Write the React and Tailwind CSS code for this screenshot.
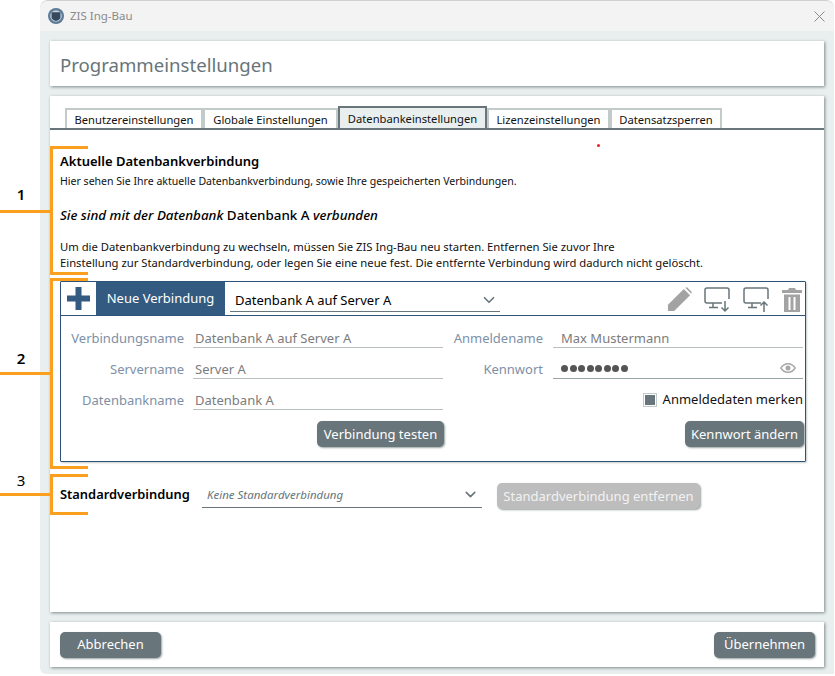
import React from "react";
import { ChevronDown } from "lucide-react";

const FONT = { fontFamily: '"Noto Sans", "Open Sans", sans-serif' };

function Tab({ children, active, w }) {
  if (active) {
    return (
      <div className={`${w} h-[22px] -mt-px border-2 border-b-0 border-[#68757a] bg-[#e9eeee] text-[11.2px] text-[#111] flex items-center justify-center pt-[2px]`}>
        {children}
      </div>
    );
  }
  return (
    <div className={`${w} h-[20px] border-2 border-b-0 border-[#c3caca] bg-white text-[11.2px] text-[#111] flex items-center justify-center pt-[2px]`}>
      {children}
    </div>
  );
}

function Field({ label, children, dark, labelW, padded }) {
  return (
    <div className="flex items-end h-[21px]">
      <div className={`${labelW} text-right text-[13px] leading-[20px] text-[#7d90a8] shrink-0`}>{label}</div>
      <div className={`flex-1 h-[21px] border-b flex items-center pt-[3px] text-[13px] text-[#7c7c7c] ${padded ? "ml-[10px] pl-[8px]" : "ml-[9px] pl-[2px]"} ${dark ? "border-[#9aa5a8]" : "border-[#b9bebf]"}`}>
        {children}
      </div>
    </div>
  );
}

function Btn({ children, w, disabled }) {
  return (
    <div className={`${w} h-[26px] rounded-[5px] flex items-center justify-center pt-[1px] text-[13px] shadow-[1px_1px_2px_#9aa3a3] ${disabled ? "bg-[#bdbdbd] text-[#f2f2f2]" : "bg-[#68757a] text-white"}`}>
      {children}
    </div>
  );
}

function Bracket({ top, height, stem, num, numTop, bold }) {
  return (
    <>
      <div className="absolute left-[50px] w-[38px] border-[3px] border-r-0 border-[#fb9f1e]" style={{ top, height }} />
      <div className="absolute left-0 w-[50px] h-[3px] bg-[#fb9f1e]" style={{ top: stem }} />
      <div className={`absolute left-[14px] w-[14px] text-center text-[15px] leading-[20px] text-black ${bold ? "font-semibold" : ""}`} style={{ top: numTop }}>
        {num}
      </div>
    </>
  );
}

export default function App() {
  return (
    <div style={FONT} className="relative w-[835px] h-[676px] bg-white overflow-hidden pl-[40px]">
      <div className="w-[794px] h-[674px] rounded-t-[8px] rounded-bl-[6px] bg-[#e9eeee] border-t border-[#cfcfcf] flex flex-col">
        {/* title bar */}
        <div className="h-[30px] shrink-0 bg-[#f3f3f3] rounded-t-[8px] flex items-center pl-[8px] pr-[9px]">
          <svg width="16" height="16" viewBox="0 0 16 16">
            <circle cx="8" cy="8" r="8" fill="#5b7a96" />
            <circle cx="8" cy="8" r="5.8" fill="#c7d0d8" />
            <path d="M3.6 4.2h8.8v5.2c0 1.6-2.6 3.2-4.4 3.6-1.8-.4-4.4-2-4.4-3.6z" fill="#34495e" />
          </svg>
          <span className="ml-[6px] text-[11.5px] text-[#8a8a8a]">ZIS Ing-Bau</span>
          <svg className="ml-auto" width="11" height="11" viewBox="0 0 11 11" stroke="#8c8c8c" strokeWidth="1">
            <path d="M.5.5l10 10M10.5.5l-10 10" />
          </svg>
        </div>

        <div className="flex-1 flex flex-col px-[10px] pt-[10px]">
          {/* header */}
          <div className="h-[45px] shrink-0 bg-white shadow-[1px_1px_3px_#7f8a8a] flex items-center pl-[10px] pt-[3px] text-[18.6px] text-[#68757a]">
            Programmeinstellungen
          </div>

          {/* main card */}
          <div className="mt-[10px] h-[516px] shrink-0 bg-white shadow-[1px_1px_3px_#7f8a8a] flex flex-col">
            <div className="mt-[13px] h-[21px] shrink-0 border-b-2 border-[#68757a] flex items-end pl-[15px]">
              <Tab w="w-[138px]">Benutzereinstellungen</Tab>
              <Tab w="w-[135px]">Globale Einstellungen</Tab>
              <Tab w="w-[149px]" active>Datenbankeinstellungen</Tab>
              <Tab w="w-[123px]">Lizenzeinstellungen</Tab>
              <Tab w="w-[112px]">Datensatzsperren</Tab>
            </div>

            <div className="pl-[10px] pr-[18px]">
              <div className="mt-[22px] text-[13px] leading-[18px] font-semibold text-black">Aktuelle Datenbankverbindung</div>
              <div className="mt-[3px] text-[10.55px] leading-[16px] text-[#111]">
                Hier sehen Sie Ihre aktuelle Datenbankverbindung, sowie Ihre gespeicherten Verbindungen.
              </div>
              <div className="mt-[17px] text-[13.4px] leading-[18px] text-black">
                <span className="italic font-medium">Sie sind mit der Datenbank </span>
                <span className="font-medium">Datenbank A </span>
                <span className="italic font-medium">verbunden</span>
              </div>
              <div className="mt-[15px] text-[11.25px] leading-[16px] text-[#111]">
                Um die Datenbankverbindung zu wechseln, müssen Sie ZIS Ing-Bau neu starten. Entfernen Sie zuvor Ihre
                <br />
                Einstellung zur Standardverbindung, oder legen Sie eine neue fest. Die entfernte Verbindung wird dadurch nicht gelöscht.
              </div>

              {/* connection panel */}
              <div className="mt-[10px] w-[746px] h-[181px] border border-[#2f5378] rounded-[1px] shadow-[1px_1px_2px_#c5cbcb] flex flex-col">
                <div className="h-[34px] shrink-0 border-b border-[#2f5378] flex">
                  <div className="w-[35px] flex items-center justify-center">
                    <svg width="25" height="25" viewBox="0 0 25 25" fill="#335a80">
                      <path d="M9.5 1h6v8.500h8.500v6h-8.500v8.500h-6v-8.500h-8.500v-6h8.500z" />
                    </svg>
                  </div>
                  <div className="w-[129px] bg-[#335a80] text-white text-[13px] flex items-center justify-center pt-[1px]">Neue Verbindung</div>
                  <div className="ml-[5px] w-[270px] h-[30px] border-b border-[#68757a] flex items-center pt-[8px] pl-[5px] pr-[2px] text-[13px] text-black">
                    Datenbank A auf Server A
                    <ChevronDown className="ml-auto -mt-[2px]" size={18} strokeWidth={2.2} color="#68757a" />
                  </div>
                  <div className="ml-auto flex items-center pr-[3px] gap-[12px] pt-[2px]">
                    <svg width="25" height="25" viewBox="0 0 26 26" fill="#a3a3a3">
                      <path d="M1 25v-6.500L17.500 2l6.500 6.500L7.500 25z" />
                      <path d="M19 .8l1.800-.6 5 5-.6 1.800z" />
                    </svg>
                    <svg width="27" height="26" viewBox="0 0 27 26" fill="none" stroke="#68757a" strokeWidth="1.500">
                      <path d="M18 16H3a2 2 0 0 1-2-2V3a2 2 0 0 1 2-2h20a2 2 0 0 1 2 2v9" />
                      <path d="M9 16v4M5 20.500h9" />
                      <path d="M21 14v10M17.500 20.500L21 24l3.500-3.500" />
                    </svg>
                    <svg width="27" height="26" viewBox="0 0 27 26" fill="none" stroke="#68757a" strokeWidth="1.500">
                      <path d="M18 16H3a2 2 0 0 1-2-2V3a2 2 0 0 1 2-2h20a2 2 0 0 1 2 2v9" />
                      <path d="M9 16v4M5 20.500h9" />
                      <path d="M21 25V15M17.500 18.500L21 15l3.500 3.500" />
                    </svg>
                    <svg width="20" height="26" viewBox="0 0 20 26" fill="#a3a3a3">
                      <path d="M7 1h6l1 2h6v3H0V3h6z" />
                      <path d="M2 7.500h16V25H2zM6.500 10v13h2V10zM11.500 10v13h2V10z" fillRule="evenodd" />
                    </svg>
                  </div>
                </div>

                <div className="relative flex-1 pl-[10px] pr-[2px] pt-[11px]">
                  <div className="grid grid-cols-[372px_350px] gap-x-[10px]">
                    <div className="flex flex-col gap-[10px]">
                      <Field label="Verbindungsname" labelW="w-[113px]">Datenbank A auf Server A</Field>
                      <Field label="Servername" labelW="w-[113px]">Server A</Field>
                      <Field label="Datenbankname" labelW="w-[113px]">Datenbank A</Field>
                      <div className="flex justify-end mt-[1px] -mr-px">
                        <Btn w="w-[127px]">Verbindung testen</Btn>
                      </div>
                    </div>
                    <div className="flex flex-col gap-[10px]">
                      <Field label="Anmeldename" labelW="w-[90px]" padded>Max Mustermann</Field>
                      <Field label="Kennwort" labelW="w-[90px]" dark padded>
                        <div className="flex items-center gap-[1.500px] -mt-[3px]">
                          {[0, 1, 2, 3, 4, 5, 6, 7].map((i) => (
                            <span key={i} className="w-[7px] h-[7px] rounded-full bg-[#555]" />
                          ))}
                        </div>
                        <svg className="ml-auto mr-[7px] -mt-[3px]" width="16" height="12" viewBox="0 0 16 12" fill="#a8a8a8">
                          <path fillRule="evenodd" d="M8 1c3.500 0 6.500 2 8 5-1.500 3-4.500 5-8 5s-6.500-2-8-5c1.500-3 4.500-5 8-5zm0 1.500C5.500 2.500 3.200 3.800 1.800 6 3.200 8.200 5.500 9.500 8 9.500s4.800-1.300 6.200-3.500C12.800 3.800 10.500 2.500 8 2.500zM8 3.500a2.500 2.500 0 1 1 0 5 2.500 2.500 0 0 1 0-5z" />
                        </svg>
                      </Field>
                      <div className="h-[21px] flex items-center justify-end">
                        <div className="w-[14px] h-[14px] border border-[#c3caca] p-[1px] mr-[6px]">
                          <div className="w-full h-full bg-[#68757a]" />
                        </div>
                        <span className="text-[13px] text-[#111]">Anmeldedaten merken</span>
                      </div>
                      <div className="flex justify-end mt-[1px] -mr-px">
                        <Btn w="w-[119px]">Kennwort ändern</Btn>
                      </div>
                    </div>
                  </div>
                </div>
              </div>

              {/* default connection */}
              <div className="mt-[21px] flex items-start">
                <div className="w-[142px] h-[23px] flex items-center text-[12.9px] font-semibold text-black">Standardverbindung</div>
                <div className="w-[280px] h-[25px] border-b border-[#68757a] flex items-center pl-[5px] pr-[3px] text-[11.5px] italic text-[#68757a]">
                  Keine Standardverbindung
                  <ChevronDown className="ml-auto -mt-[2px]" size={17} strokeWidth={2.2} color="#68757a" />
                </div>
                <div className="ml-[15px]">
                  <Btn w="w-[203px]" disabled>Standardverbindung entfernen</Btn>
                </div>
              </div>
            </div>
          </div>

          {/* footer */}
          <div className="mt-[10px] h-[45px] shrink-0 bg-white shadow-[1px_1px_3px_#7f8a8a] flex items-center justify-between pl-[10px] pr-[9px]">
            <Btn w="w-[101px]">Abbrechen</Btn>
            <Btn w="w-[101px]">Übernehmen</Btn>
          </div>
        </div>
      </div>

      {/* annotations */}
      <div className="absolute left-[597px] top-[144px] w-[3px] h-[3px] rounded-full bg-[#ee1c25]" />
      <Bracket top={146} height={129} stem={210} num="1" numTop={184} bold />
      <Bracket top={278} height={191} stem={372} num="2" numTop={348} bold />
      <Bracket top={474} height={41} stem={493} num="3" numTop={470} />
    </div>
  );
}
